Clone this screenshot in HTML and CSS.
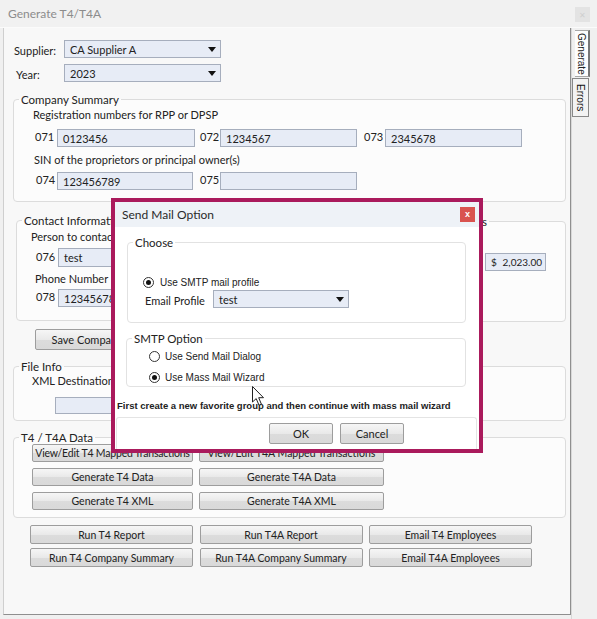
FILE: index.html
```html
<!DOCTYPE html>
<html>
<head>
<meta charset="utf-8">
<link rel="stylesheet" href="styles.css">
</head>
<body>
<div class="window">
  <div class="titlebar">
    <span class="title">Generate T4/T4A</span>
    <span class="tclose">&#x2715;</span>
  </div>
  <div class="content">
    <div class="panel">
      <div class="frow">
        <span class="flabel sup">Supplier:</span>
        <div class="select w157"><span>CA Supplier A</span><svg class="arr" width="8" height="5" viewBox="0 0 8 5"><polygon points="0,0 8,0 4,5" fill="#111"/></svg></div>
      </div>
      <div class="frow year">
        <span class="flabel yr">Year:</span>
        <div class="select w157"><span>2023</span><svg class="arr" width="8" height="5" viewBox="0 0 8 5"><polygon points="0,0 8,0 4,5" fill="#111"/></svg></div>
      </div>

      <div class="group company">
        <div class="legend">Company Summary</div>
        <div class="line reg">Registration numbers for RPP or DPSP</div>
        <div class="irow r1">
          <span class="num n071">071</span><div class="input w138">0123456</div>
          <span class="num n072">072</span><div class="input w137">1234567</div>
          <span class="num n073">073</span><div class="input w137">2345678</div>
        </div>
        <div class="line sin">SIN of the proprietors or principal owner(s)</div>
        <div class="irow r2">
          <span class="num n074">074</span><div class="input w136">123456789</div>
          <span class="num n075">075</span><div class="input w137"></div>
        </div>
      </div>

      <div class="pair">
        <div class="group contact">
          <div class="legend">Contact Information</div>
          <div class="line person">Person to contact about the information</div>
          <div class="irow r3">
            <span class="num n076">076</span><div class="input w200 h19">test</div>
          </div>
          <div class="line phone">Phone Number</div>
          <div class="irow r4">
            <span class="num n076">078</span><div class="input w200">1234567890</div>
          </div>
        </div>
        <div class="group totals">
          <div class="legend rlegend">Totals of Pension Contributions and Fees</div>
          <div class="input money"><span>$</span><span>2,023.00</span></div>
        </div>
      </div>

      <div class="btn save">Save Company Summary</div>

      <div class="group fileinfo">
        <div class="legend">File Info</div>
        <div class="line xml">XML Destination Folder</div>
        <div class="input xmlin"></div>
      </div>

      <div class="group t4data">
        <div class="legend">T4 / T4A Data</div>
        <div class="bgrid">
          <div class="btn">View/Edit T4 Mapped Transactions</div>
          <div class="btn">View/Edit T4A Mapped Transactions</div>
          <div class="btn">Generate T4 Data</div>
          <div class="btn">Generate T4A Data</div>
          <div class="btn">Generate T4 XML</div>
          <div class="btn">Generate T4A XML</div>
        </div>
      </div>

      <div class="rgrid">
        <div class="btn">Run T4 Report</div>
        <div class="btn">Run T4A Report</div>
        <div class="btn">Email T4 Employees</div>
        <div class="btn">Run T4 Company Summary</div>
        <div class="btn">Run T4A Company Summary</div>
        <div class="btn">Email T4A Employees</div>
      </div>
    </div>
    <div class="tabs">
      <div class="tab active">Generate</div>
      <div class="tab errors">Errors</div>
    </div>
  </div>
</div>

<div class="dialog">
  <div class="dtitle">
    <span>Send Mail Option</span>
    <span class="dclose">x</span>
  </div>
  <div class="dbody">
    <div class="group choose">
      <div class="legend">Choose</div>
      <div class="rrow smtp"><span class="radio on"></span><span class="rtext">Use SMTP mail profile</span></div>
      <div class="prow">
        <span class="plabel">Email Profile</span>
        <div class="select w136"><span>test</span><svg class="arr" width="8" height="5" viewBox="0 0 8 5"><polygon points="0,0 8,0 4,5" fill="#111"/></svg></div>
      </div>
    </div>
    <div class="group smtpopt">
      <div class="legend">SMTP Option</div>
      <div class="rrow o1"><span class="radio"></span><span class="rtext">Use Send Mail Dialog</span></div>
      <div class="rrow o2"><span class="radio on"></span><span class="rtext">Use Mass Mail Wizard</span></div>
    </div>
    <div class="note">First create a new favorite group and then continue with mass mail wizard</div>
    <div class="dfoot">
      <div class="btn dbtn">OK</div>
      <div class="btn dbtn">Cancel</div>
    </div>
  </div>
</div>

<svg class="cursor" width="13" height="21" viewBox="0 0 13 21">
  <path d="M0.5,0.5 L0.5,16 L4.2,12.6 L7,19.2 L9.4,18.2 L6.7,11.7 L11.5,11.7 Z" fill="#fff" stroke="#222" stroke-width="1"/>
</svg>
</body>
</html>
```

FILE: styles.css
```css
html, body {
  margin: 0;
  padding: 0;
}
body {
  width: 597px;
  height: 619px;
  overflow: hidden;
  background: #f0f0f0;
  position: relative;
  font-family: Lato, "Liberation Sans", sans-serif;
  font-size: 11px;
  color: #222;
}
.window {
  display: flex;
  flex-direction: column;
  height: 619px;
}
.titlebar {
  height: 27px;
  display: flex;
  align-items: center;
  padding-left: 8px;
  background: #f1f1f1;
  border-bottom: 1px solid #fbfbfb;
}
.title {
  color: #8c8c8c;
  font-size: 12px;
}
.tclose {
  margin-left: auto;
  margin-right: 7px;
  width: 15px;
  height: 15px;
  background: #e3e3e3;
  color: #cfcfcf;
  font-size: 8px;
  display: flex;
  align-items: center;
  justify-content: center;
  margin-top: 2px;
}
.content {
  display: flex;
  height: 591px;
}
.panel {
  width: 569px;
  height: 587px;
  box-sizing: border-box;
  margin-left: 3px;
  border-left: 1px solid #cfcfcf;
  border-right: 1px solid #8f8f8f;
  border-bottom: 1px solid #8f8f8f;
  background: #f8f8f8;
  padding: 12px 0 0 9px;
}
.tabs {
  width: 25px;
  display: flex;
  flex-direction: column;
  padding-top: 2px;
  border-left: 1px solid #d8d8d8;
}
.tab {
  writing-mode: vertical-rl;
  font-family: "Liberation Sans", sans-serif;
  font-size: 10px;
  text-align: center;
  display: flex;
  align-items: center;
  justify-content: center;
  box-sizing: border-box;
}
.tab.active {
  margin-left: 3px;
  width: 15px;
  height: 47px;
  background: #fdfdfd;
  border: 1px solid #a8a8a8;
  border-left: none;
  border-right: 2px solid #777;
}
.tab.errors {
  margin-left: 0;
  width: 17px;
  height: 39px;
  margin-top: 1px;
  background: #f3f3f3;
  border: 1px solid #888;
  color: #111;
}

/* form rows */
.frow {
  display: flex;
  align-items: center;
  height: 18px;
}
.frow.year {
  margin-top: 6px;
}
.flabel {
  width: 51px;
  box-sizing: border-box;
}
.flabel.sup { padding-left: 1px; padding-top: 3px; }
.flabel.yr { padding-left: 3px; padding-top: 3px; }

.select {
  height: 18px;
  box-sizing: border-box;
  background: #e7ecf6;
  border: 1px solid #a6aebd;
  display: flex;
  align-items: center;
  padding-left: 5px;
  padding-right: 4px;
}
.select span { flex: 1; }
.arr { display: block; }
.w157 { width: 157px; }
.w136 { width: 136px; }

.input {
  height: 18px;
  box-sizing: border-box;
  background: #e7ecf6;
  border: 1px solid #a6aebd;
  padding-left: 5px;
  display: flex;
  align-items: center;
}
.w138 { width: 138px; }
.w137 { width: 137px; }
.w136 { width: 136px; }
.w200 { width: 200px; }
.h19 { height: 19px; }

/* groups */
.group {
  border: 1px solid #dcdcdc;
  border-radius: 4px;
  background: #fcfcfc;
  box-sizing: border-box;
  display: flex;
  flex-direction: column;
  align-items: flex-start;
}
.legend {
  margin-top: -8px;
  margin-left: 5px;
  padding: 0 2px;
  line-height: 15px;
  height: 15px;
  font-size: 11.5px;
  white-space: nowrap;
  background: linear-gradient(#f8f8f8 0, #f8f8f8 50%, #fcfcfc 50%);
}
.line {
  line-height: 14px;
  height: 14px;
  white-space: nowrap;
}
.company {
  margin-top: 17px;
  width: 553px;
  height: 103px;
}
.reg { margin-top: 1px; margin-left: 19px; }
.irow {
  display: flex;
  align-items: center;
}
.irow.r1 { margin-top: 7px; }
.num {
  box-sizing: border-box;
  margin-top: -3px;
}
.n071 { width: 43px; padding-left: 21px; }
.n072 { width: 25px; padding-left: 5px; }
.n073 { width: 28px; padding-left: 7px; }
.n074 { width: 43px; padding-left: 22px; }
.n075 { width: 27px; padding-left: 7px; }
.n076 { width: 41px; padding-left: 19px; }
.sin { margin-top: 6px; margin-left: 20px; }
.irow.r2 { margin-top: 5px; }

.pair {
  display: flex;
  margin-top: 18px;
  width: 553px;
}
.contact {
  margin-left: 3px;
  width: 290px;
  height: 101px;
}
.person { margin-top: 2px; margin-left: 14px; }
.irow.r3 { margin-top: 4px; }
.phone { margin-top: 5px; margin-left: 18px; }
.irow.r4 { margin-top: 3px; }
.totals {
  margin-left: 6px;
  flex: 1;
  height: 101px;
  margin-top: 1px;
  align-items: flex-end;
}
.rlegend {
  margin-left: 0;
  margin-right: 76px;
}
.money {
  margin-top: 24px;
  margin-right: 19px;
  width: 61px;
  justify-content: space-between;
  padding-left: 5px;
  padding-right: 3px;
  font-size: 10px;
}

/* buttons */
.btn {
  box-sizing: border-box;
  height: 19px;
  border: 1px solid #9d9d9d;
  border-radius: 2px;
  background: linear-gradient(#f6f6f6, #e9e9e9 50%, #dcdcdc 51%, #d9d9d9);
  display: flex;
  align-items: center;
  justify-content: center;
  white-space: nowrap;
  overflow: hidden;
  color: #222;
}
.save {
  margin-top: 7px;
  margin-left: 22px;
  width: 152px;
  height: 21px;
}
.fileinfo {
  margin-top: 16px;
  width: 553px;
  height: 55px;
}
.xml { margin-top: 0; margin-left: 18px; }
.xmlin {
  margin-top: 9px;
  margin-left: 41px;
  width: 390px;
  height: 17px;
}
.t4data {
  margin-top: 16px;
  width: 553px;
  height: 81px;
}
.bgrid {
  display: grid;
  grid-template-columns: 161px 185px;
  column-gap: 6px;
  row-gap: 6px;
  margin-left: 18px;
  margin-top: -1px;
  grid-auto-rows: 18px;
  font-size: 10.5px;
}
.bgrid .btn { height: 18px; }
.bgrid .btn:first-child { letter-spacing: -0.2px; }
.rgrid {
  display: grid;
  grid-template-columns: 163px 163px 163px;
  column-gap: 6.5px;
  row-gap: 4px;
  margin-top: 7px;
  margin-left: 17px;
  grid-auto-rows: 19px;
  font-size: 10.5px;
}
.rgrid .btn { height: 19px; }

/* dialog */
.dialog {
  position: absolute;
  left: 111px;
  top: 198px;
  width: 372px;
  height: 255px;
  box-sizing: border-box;
  border: 4px solid #aa1a5c;
  background: #fff;
  display: flex;
  flex-direction: column;
}
.dtitle {
  height: 25px;
  background: #eef2f7;
  display: flex;
  align-items: center;
  padding-left: 7px;
  font-size: 12px;
  color: #2a2a2a;
}
.dclose {
  margin-left: auto;
  margin-right: 4px;
  width: 15px;
  height: 15px;
  background: #d9534f;
  color: #fff;
  font-family: "Liberation Sans", sans-serif;
  font-weight: bold;
  font-size: 9px;
  display: flex;
  align-items: center;
  justify-content: center;
  line-height: 1;
}
.dbody {
  display: flex;
  flex-direction: column;
  flex: 1;
}
.dbody .group { background: #fff; border-color: #e2e2e2; }
.dbody .legend { background: #fff; }
.choose {
  margin-top: 15px;
  margin-left: 12px;
  width: 339px;
  height: 81px;
}
.rrow {
  display: flex;
  align-items: center;
  height: 12px;
  font-family: "Liberation Sans", sans-serif;
  font-size: 10px;
}
.radio {
  width: 11px;
  height: 11px;
  box-sizing: border-box;
  border: 1px solid #333;
  border-radius: 50%;
  background: #fff;
  display: flex;
  align-items: center;
  justify-content: center;
}
.radio.on::after {
  content: "";
  width: 5px;
  height: 5px;
  border-radius: 50%;
  background: #111;
}
.smtp { margin-top: 26px; margin-left: 15px; }
.smtp .rtext { margin-left: 6px; }
.prow {
  display: flex;
  align-items: center;
  margin-top: 2px;
  margin-left: 17px;
}
.plabel {
  width: 68px;
  padding-top: 3px;
}
.smtpopt {
  margin-top: 15px;
  margin-left: 11px;
  width: 340px;
  height: 49px;
}
.o1 { margin-top: 4px; margin-left: 22px; }
.o2 { margin-top: 9px; margin-left: 22px; }
.rtext { margin-left: 5px; }
.note {
  margin-top: 13px;
  margin-left: 2px;
  font-family: "Liberation Sans", sans-serif;
  font-weight: bold;
  font-size: 9.5px;
  line-height: 12px;
  white-space: nowrap;
}
.dfoot {
  margin-top: 5px;
  margin-left: 1px;
  width: 361px;
  flex: 1;
  box-sizing: border-box;
  border: 1px solid #e4e4e4;
  border-bottom: none;
  border-radius: 3px 3px 0 0;
  display: flex;
  padding-top: 5px;
  padding-left: 152px;
  gap: 7px;
}
.dbtn {
  width: 64px;
  height: 21px;
}
.cursor {
  position: absolute;
  left: 252px;
  top: 386px;
}
```
